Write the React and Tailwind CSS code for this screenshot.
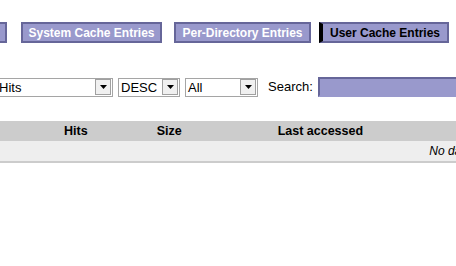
const TABS = [
  { label: 'Directory Entries', w: 'w-[207px]', ml: 'ml-[-200px]' },
  { label: 'System Cache Entries', w: 'w-[141px]', ml: 'ml-[14px]' },
  { label: 'Per-Directory Entries', w: 'w-[137px]', ml: 'ml-[12px]' },
  { label: 'User Cache Entries', w: 'w-[130px]', ml: 'ml-[8px]', active: true },
]

function Arrow() {
  return (
    <div className="w-[16px] h-[16px] border border-[#a0a0a0] bg-[#f0f0f0] flex items-center justify-center shrink-0">
      <svg width="7" height="4" viewBox="0 0 7 4">
        <path d="M0 0h7L3.5 4z" fill="#000" />
      </svg>
    </div>
  )
}

function Select({ value, w, ml }) {
  return (
    <div className={`${w} ${ml} h-[19px] border border-[#a5a5a5] bg-white flex items-center justify-between pl-[2px] pr-[1px] shrink-0`}>
      <span className="text-[13px] leading-none text-black">{value}</span>
      <Arrow />
    </div>
  )
}

export default function App() {
  return (
    <div className="w-[456px] h-[266px] bg-white overflow-hidden" style={{ fontFamily: '"Liberation Sans", Arial, sans-serif' }}>

      {/* Tabs */}
      <div className="flex pt-[22px]">
        {TABS.map(t => (
          <div
            key={t.label}
            className={`${t.w} ${t.ml} h-[21px] shrink-0 bg-[#9999cc] flex items-center justify-center text-[12px] font-bold whitespace-nowrap border-2 border-[#666699] ${t.active ? 'text-black border-l-[4px] border-l-black' : 'text-white'}`}
          >
            {t.label}
          </div>
        ))}
      </div>

      {/* Filters */}
      <div className="flex items-center mt-[34px]">
        <Select value="Hits" w="w-[117px]" ml="ml-[-4px]" />
        <Select value="DESC" w="w-[62px]" ml="ml-[5px]" />
        <Select value="All" w="w-[73px]" ml="ml-[5px]" />
        <span className="ml-[10px] text-[13px] text-black">Search:</span>
        <div className="ml-[5px] w-[150px] h-[20px] bg-[#9999cc] border-2 border-[#666699] border-r-0 border-b-[#9999cc] shrink-0" />
      </div>

      {/* Table */}
      <div className="mt-[24px]">
        <div className="h-[20px] bg-[#cccccc] flex items-center text-[12.5px] font-bold text-black">
          <span className="ml-[64px]">Hits</span>
          <span className="ml-[69px]">Size</span>
          <span className="ml-[96px]">Last accessed</span>
        </div>
        <div className="h-[22px] bg-[#eeeeee] border-b-2 border-[#cccccc] flex items-center justify-end">
          <span className="text-[12px] italic text-black whitespace-nowrap mr-[-66px]">No data available</span>
        </div>
      </div>
    </div>
  )
}
